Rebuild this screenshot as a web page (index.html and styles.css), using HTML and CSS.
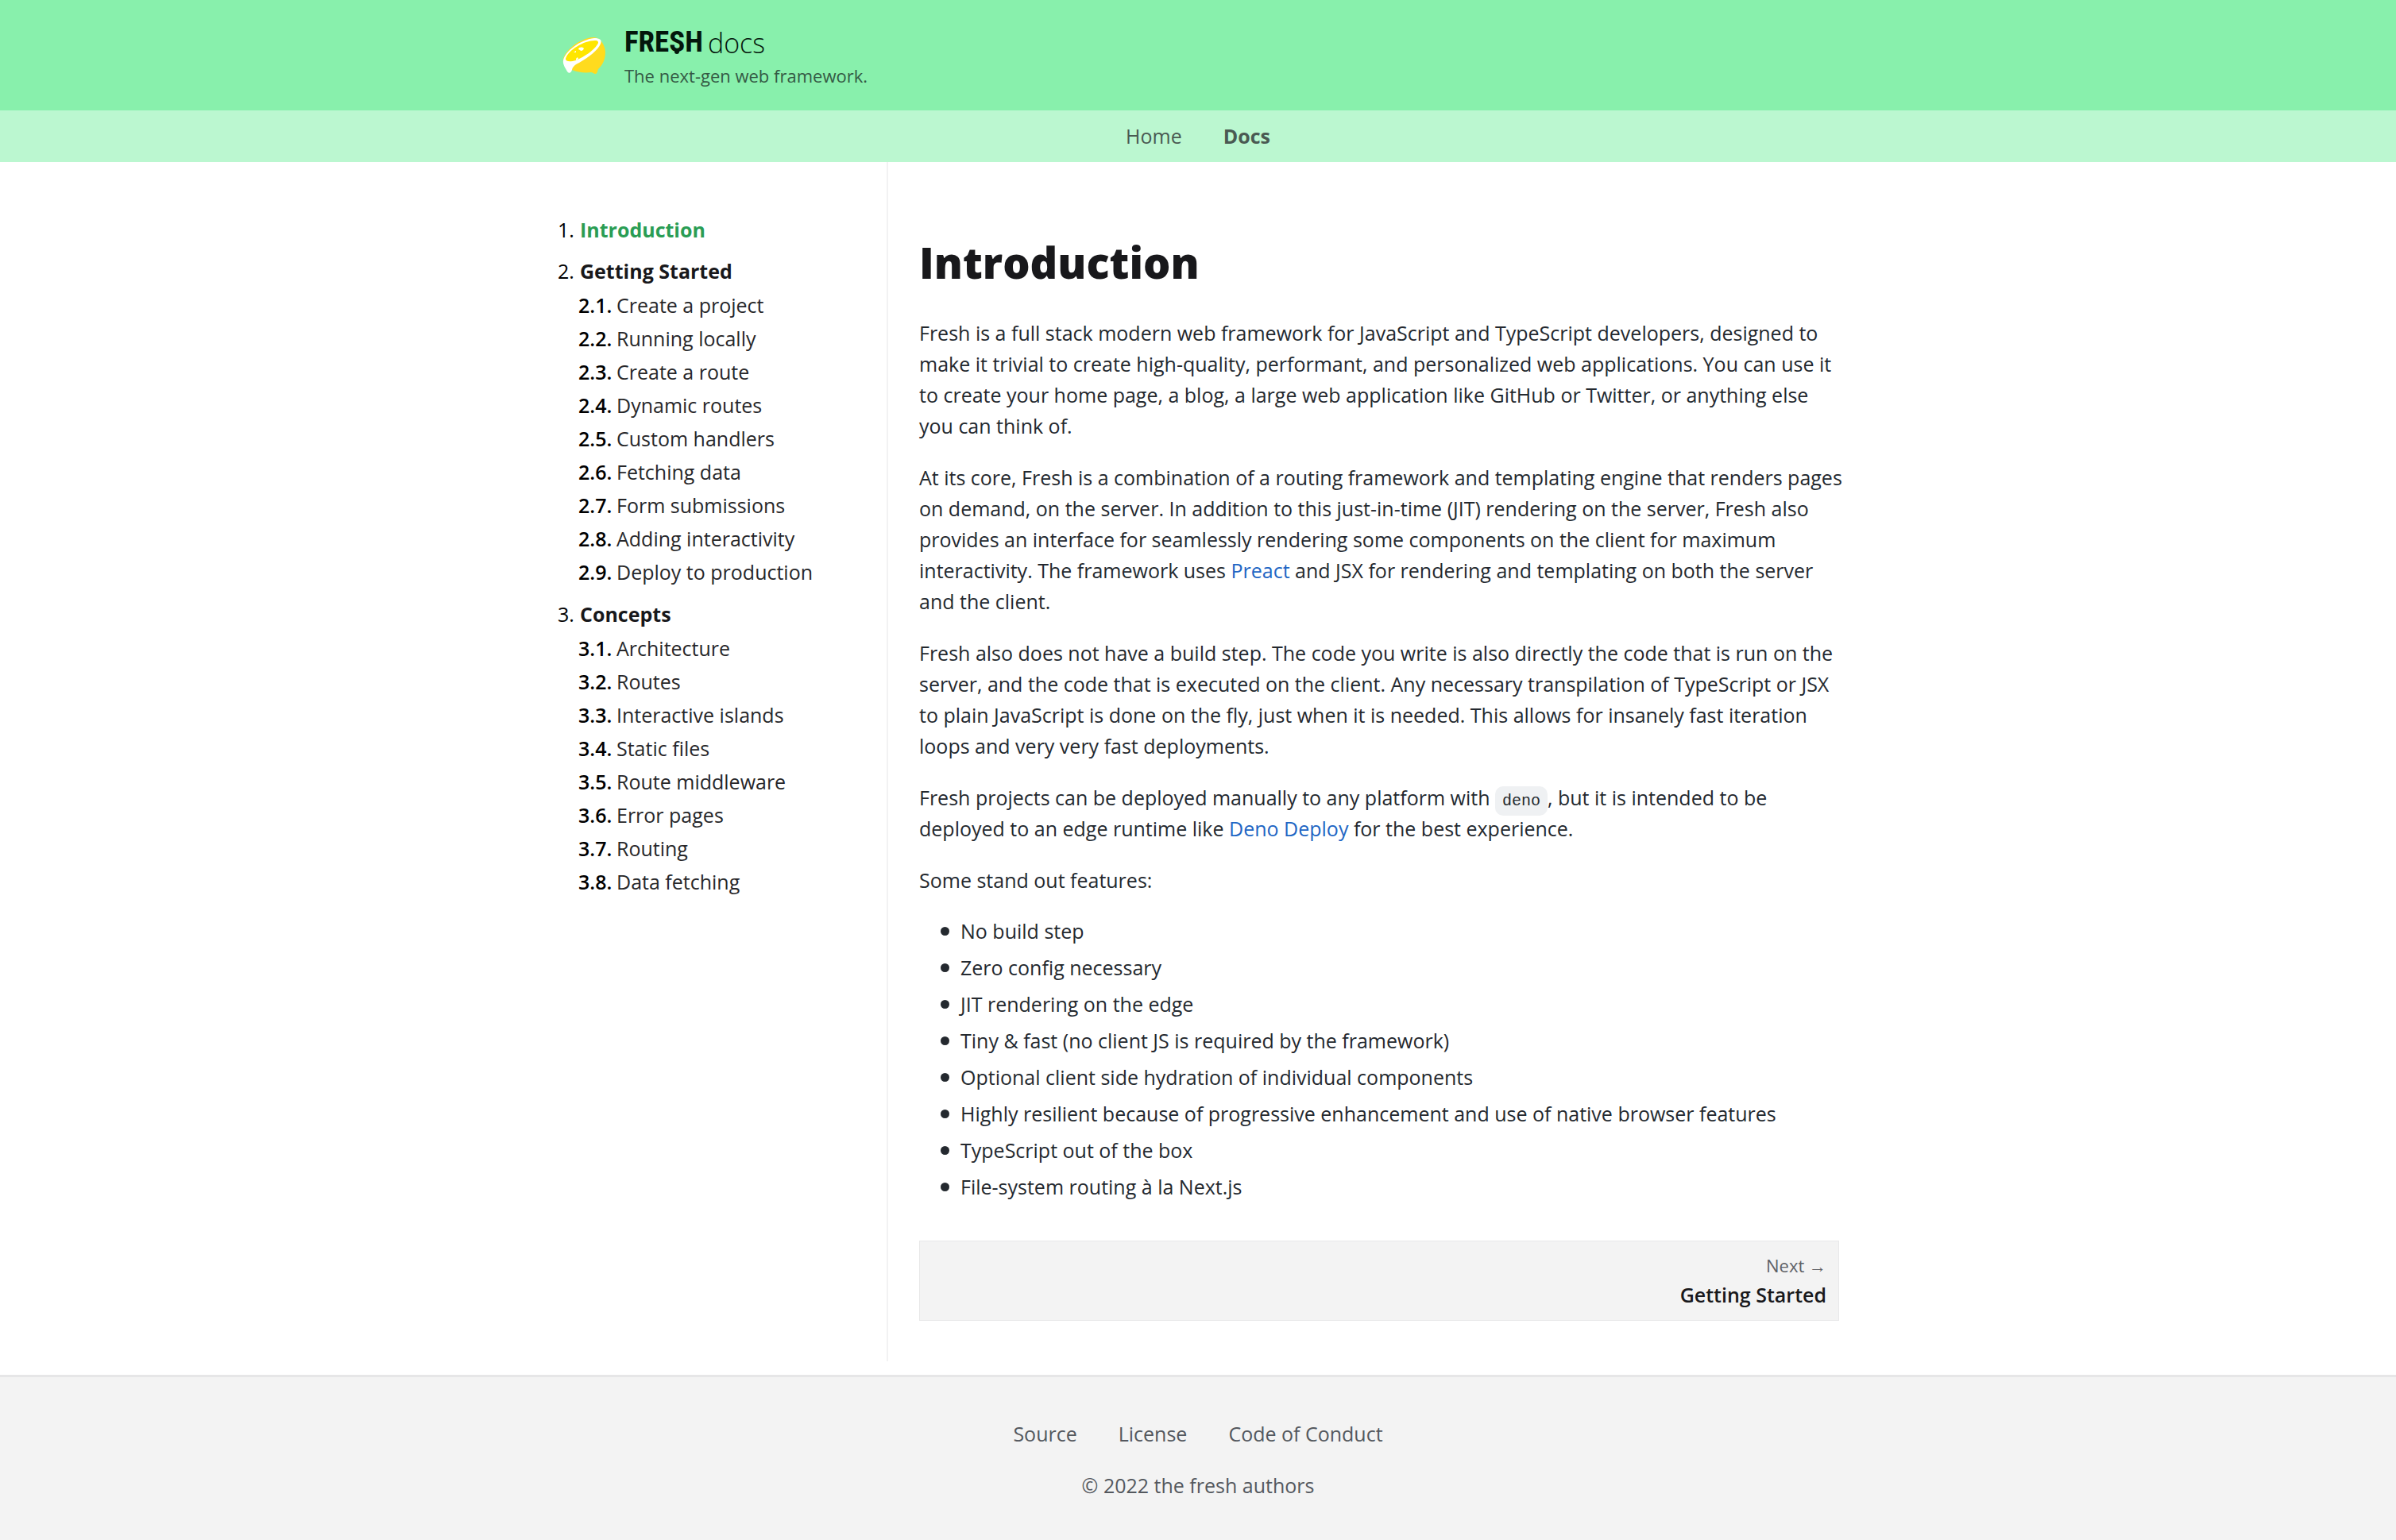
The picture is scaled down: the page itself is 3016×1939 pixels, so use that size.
FILE: index.html
```html
<!DOCTYPE html>
<html lang="en">
<head>
<meta charset="utf-8">
<meta name="viewport" content="width=device-width, initial-scale=1">
<title>Introduction | fresh docs</title>
<link rel="stylesheet" href="styles.css">
</head>
<body>
<header class="header">
  <div class="container header-inner">
    <a class="logo" href="#" aria-label="Fresh home">
      <svg class="lemon" viewBox="0 0 54 46" aria-hidden="true">
        <path fill="#ffdb1e" d="M1 31C-1 20 20 1 39 0c8 0 14 8 15 18 0 10-3 16-9 22-1 3-1 5-3 6-3 0-4-2-6-2-8 1-17 0-24-3z"/>
        <path fill="#fff" d="M1 29C3 18 22 3 40 1c7 0 10 2 8 7-3 8-15 17-27 24-6 3-8 5-9 9-1 4-4 5-6 2-2-4-6-9-5-14z"/>
        <path fill="#ffe600" d="M4 27C7 16 27 4 41 4c4 0 5 2 3 5-5 8-16 15-27 20-7 2-13 2-13-2z"/>
        <path fill="#fff" d="M20 15c1-3 5-3 7-1-1 3-4 4-5 2zM14 19l3-2v2zM17 27l2-2 1 2-3 2z"/>
      </svg>
    </a>
    <div class="brand">
      <div class="wordmark"><span class="word-fresh">FRE<span class="drip">S</span>H</span><span class="word-docs">docs</span></div>
      <p class="tagline">The next-gen web framework.</p>
    </div>
  </div>
</header>
<nav class="topnav" aria-label="Main">
  <a href="#">Home</a>
  <a class="current" href="#">Docs</a>
</nav>
<div class="container layout">
  <nav class="sidebar" aria-label="Table of contents">
    <ol class="toc">
      <li><div class="chapter"><span>1.</span><a class="active" href="#">Introduction</a></div></li>
      <li><div class="chapter"><span>2.</span><a href="#">Getting Started</a></div>
        <ol class="sections">
          <li><b>2.1.</b><a href="#">Create a project</a></li>
          <li><b>2.2.</b><a href="#">Running locally</a></li>
          <li><b>2.3.</b><a href="#">Create a route</a></li>
          <li><b>2.4.</b><a href="#">Dynamic routes</a></li>
          <li><b>2.5.</b><a href="#">Custom handlers</a></li>
          <li><b>2.6.</b><a href="#">Fetching data</a></li>
          <li><b>2.7.</b><a href="#">Form submissions</a></li>
          <li><b>2.8.</b><a href="#">Adding interactivity</a></li>
          <li><b>2.9.</b><a href="#">Deploy to production</a></li>
        </ol>
      </li>
      <li><div class="chapter"><span>3.</span><a href="#">Concepts</a></div>
        <ol class="sections">
          <li><b>3.1.</b><a href="#">Architecture</a></li>
          <li><b>3.2.</b><a href="#">Routes</a></li>
          <li><b>3.3.</b><a href="#">Interactive islands</a></li>
          <li><b>3.4.</b><a href="#">Static files</a></li>
          <li><b>3.5.</b><a href="#">Route middleware</a></li>
          <li><b>3.6.</b><a href="#">Error pages</a></li>
          <li><b>3.7.</b><a href="#">Routing</a></li>
          <li><b>3.8.</b><a href="#">Data fetching</a></li>
        </ol>
      </li>
    </ol>
  </nav>
  <main class="content">
    <h1>Introduction</h1>
    <div class="prose">
      <p>Fresh is a full stack modern web framework for JavaScript and TypeScript developers, designed to make it trivial to create high-quality, performant, and personalized web applications. You can use it to create your home page, a blog, a large web application like GitHub or Twitter, or anything else you can think of.</p>
      <p>At its core, Fresh is a combination of a routing framework and templating engine that renders pages on demand, on the server. In addition to this just-in-time (JIT) rendering on the server, Fresh also provides an interface for seamlessly rendering some components on the client for maximum interactivity. The framework uses <a href="#">Preact</a> and JSX for rendering and templating on both the server and the client.</p>
      <p>Fresh also does not have a build step. The code you write is also directly the code that is run on the server, and the code that is executed on the client. Any necessary transpilation of TypeScript or JSX to plain JavaScript is done on the fly, just when it is needed. This allows for insanely fast iteration loops and very very fast deployments.</p>
      <p>Fresh projects can be deployed manually to any platform with <code>deno</code>, but it is intended to be deployed to an edge runtime like <a href="#">Deno Deploy</a> for the best experience.</p>
      <p>Some stand out features:</p>
      <ul>
        <li>No build step</li>
        <li>Zero config necessary</li>
        <li>JIT rendering on the edge</li>
        <li>Tiny &amp; fast (no client JS is required by the framework)</li>
        <li>Optional client side hydration of individual components</li>
        <li>Highly resilient because of progressive enhancement and use of native browser features</li>
        <li>TypeScript out of the box</li>
        <li>File-system routing à la Next.js</li>
      </ul>
    </div>
    <a class="next" href="#">
      <span class="next-label">Next →</span>
      <span class="next-title">Getting Started</span>
    </a>
  </main>
</div>
<footer class="footer">
  <nav class="footer-links" aria-label="Footer">
    <a href="#">Source</a>
    <a href="#">License</a>
    <a href="#">Code of Conduct</a>
  </nav>
  <p>© 2022 the fresh authors</p>
</footer>
</body>
</html>
```

FILE: styles.css
```css
* { box-sizing: border-box; }

body {
  margin: 0;
  min-height: 100vh;
  display: flex;
  flex-direction: column;
  background: #fff;
  color: #000;
  font-family: "Open Sans", "Noto Sans", sans-serif;
  font-size: 25px;
  line-height: 39px;
}

a { color: inherit; text-decoration: none; }
p, h1, ul, ol { margin: 0; padding: 0; }
ol { list-style: none; }

.container {
  width: 100%;
  max-width: 1664px;
  margin: 0 auto;
}

/* Header */
.header { background: #88f0ac; }

.header-inner {
  display: flex;
  align-items: center;
  gap: 24px;
  padding: 31px 32px 25px;
}

.logo { flex: none; padding-bottom: 6px; }
.lemon { display: block; width: 54px; height: 46px; }

.wordmark {
  display: flex;
  align-items: flex-start;
  gap: 6px;
  color: #04170c;
}

.word-fresh {
  font-family: "Roboto Condensed", "Liberation Sans Narrow", Roboto, sans-serif;
  font-size: 37px;
  font-weight: 700;
  line-height: 44px;
}

/* Small drop hanging from the bottom of the S */
.drip { position: relative; }
.drip::after {
  content: "";
  position: absolute;
  left: 50%;
  bottom: 6px;
  width: 6px;
  height: 6px;
  margin-left: -3px;
  border-radius: 0 0 3px 3px;
  background: #04170c;
}

.word-docs {
  font-size: 34px;
  font-weight: 300;
  line-height: 46px;
}

.tagline {
  font-size: 22px;
  line-height: 37px;
  color: #345944;
}

.topnav {
  display: flex;
  justify-content: center;
  gap: 52px;
  padding: 13px;
  background: #bbf7d0;
  color: #4a5a52;
}
.topnav .current { font-weight: 700; }

/* Layout */
.layout { display: flex; }

.sidebar {
  flex: none;
  width: 442px;
  padding: 64px 26px;
  border-right: 2px solid #f2f2f3;
  line-height: 42px;
}

.toc {
  display: flex;
  flex-direction: column;
  gap: 10px;
}

.chapter { display: flex; gap: 8px; }
.chapter span { width: 20px; text-align: right; }
.chapter a { font-weight: 700; color: #18181b; }
.chapter .active { color: #2a9d54; }

.sections { padding: 1px 0 1px 26px; }
.sections li { display: flex; }
.sections b { width: 48px; font-weight: 600; }
.sections a { color: #27272a; }

.content {
  flex: 1;
  min-width: 0;
  padding: 94px 25px 51px 39px;
}

h1 {
  font-size: 54px;
  font-weight: 800;
  line-height: 65px;
  color: #18181b;
}

.prose { padding-top: 37px; color: #24292f; }
.prose p { margin-right: -6px; }
.prose p + p { margin-top: 26px; }
.prose a { color: #2166c4; }

.prose code {
  padding: 7px 9px;
  border-radius: 10px;
  background: #eff1f3;
  font-family: "Liberation Mono", monospace;
  font-size: 20px;
  line-height: 20px;
}

.prose ul { margin-top: 22px; list-style: none; }
.prose li {
  display: flex;
  align-items: center;
  gap: 14px;
  padding: 3px 0 4px 27px;
}
.prose li::before {
  content: "";
  flex: none;
  width: 11px;
  height: 11px;
  border-radius: 50%;
  background: #24292f;
}

.next {
  display: flex;
  flex-direction: column;
  align-items: flex-end;
  margin-top: 44px;
  padding: 12px 15px 13px;
  border: 1px solid #e8e8e9;
  background: #f3f3f3;
  line-height: 37px;
}
.next-label { font-size: 22px; color: #5f6166; }
.next-title { font-weight: 600; color: #18181b; }

/* Footer */
.footer {
  flex: 1;
  display: flex;
  flex-direction: column;
  align-items: center;
  gap: 26px;
  margin-top: 17px;
  padding: 52px 26px 46px;
  border-top: 3px solid #e6e6e7;
  background: #f3f3f3;
  color: #54585e;
}
.footer-links { display: flex; gap: 52px; }
```
